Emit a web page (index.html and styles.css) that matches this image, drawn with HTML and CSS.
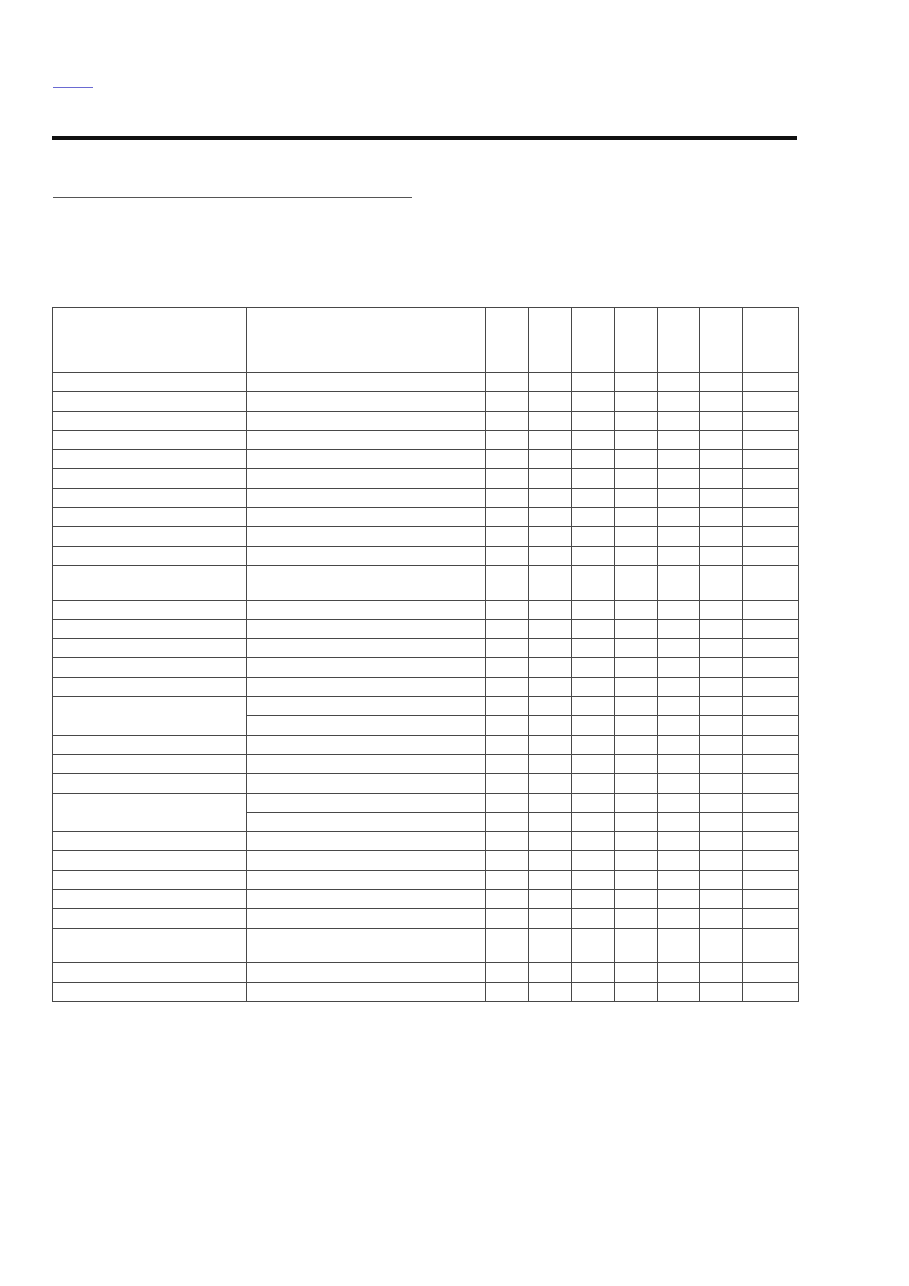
FILE: index.html
```html
<!DOCTYPE html>
<html>
<head>
<meta charset="utf-8">
<link rel="stylesheet" href="styles.css">
</head>
<body>
<div class="page">
  <div class="link-line"></div>
  <div class="rule"></div>
  <div class="sub-line"></div>
  <table class="grid">
    <colgroup>
      <col class="c1"><col class="c2"><col class="cn"><col class="cn"><col class="cn"><col class="cn"><col class="cm"><col class="cn"><col class="cl">
    </colgroup>
    <tbody>
      <tr class="head"><td></td><td></td><td></td><td></td><td></td><td></td><td></td><td></td><td></td></tr>
      <tr class="n"><td></td><td></td><td></td><td></td><td></td><td></td><td></td><td></td><td></td></tr>
      <tr class="n"><td></td><td></td><td></td><td></td><td></td><td></td><td></td><td></td><td></td></tr>
      <tr class="n"><td></td><td></td><td></td><td></td><td></td><td></td><td></td><td></td><td></td></tr>
      <tr class="n"><td></td><td></td><td></td><td></td><td></td><td></td><td></td><td></td><td></td></tr>
      <tr class="n"><td></td><td></td><td></td><td></td><td></td><td></td><td></td><td></td><td></td></tr>
      <tr class="n"><td></td><td></td><td></td><td></td><td></td><td></td><td></td><td></td><td></td></tr>
      <tr class="n"><td></td><td></td><td></td><td></td><td></td><td></td><td></td><td></td><td></td></tr>
      <tr class="n"><td></td><td></td><td></td><td></td><td></td><td></td><td></td><td></td><td></td></tr>
      <tr class="n"><td></td><td></td><td></td><td></td><td></td><td></td><td></td><td></td><td></td></tr>
      <tr class="n"><td></td><td></td><td></td><td></td><td></td><td></td><td></td><td></td><td></td></tr>
      <tr class="t"><td></td><td></td><td></td><td></td><td></td><td></td><td></td><td></td><td></td></tr>
      <tr class="n"><td></td><td></td><td></td><td></td><td></td><td></td><td></td><td></td><td></td></tr>
      <tr class="n"><td></td><td></td><td></td><td></td><td></td><td></td><td></td><td></td><td></td></tr>
      <tr class="n"><td></td><td></td><td></td><td></td><td></td><td></td><td></td><td></td><td></td></tr>
      <tr class="n"><td></td><td></td><td></td><td></td><td></td><td></td><td></td><td></td><td></td></tr>
      <tr class="n"><td></td><td></td><td></td><td></td><td></td><td></td><td></td><td></td><td></td></tr>
      <tr class="n"><td rowspan="2"></td><td></td><td></td><td></td><td></td><td></td><td></td><td></td><td></td></tr>
      <tr class="n"><td></td><td></td><td></td><td></td><td></td><td></td><td></td><td></td></tr>
      <tr class="n"><td></td><td></td><td></td><td></td><td></td><td></td><td></td><td></td><td></td></tr>
      <tr class="n"><td></td><td></td><td></td><td></td><td></td><td></td><td></td><td></td><td></td></tr>
      <tr class="n"><td></td><td></td><td></td><td></td><td></td><td></td><td></td><td></td><td></td></tr>
      <tr class="n"><td rowspan="2"></td><td></td><td></td><td></td><td></td><td></td><td></td><td></td><td></td></tr>
      <tr class="n"><td></td><td></td><td></td><td></td><td></td><td></td><td></td><td></td></tr>
      <tr class="n"><td></td><td></td><td></td><td></td><td></td><td></td><td></td><td></td><td></td></tr>
      <tr class="n"><td></td><td></td><td></td><td></td><td></td><td></td><td></td><td></td><td></td></tr>
      <tr class="n"><td></td><td></td><td></td><td></td><td></td><td></td><td></td><td></td><td></td></tr>
      <tr class="n"><td></td><td></td><td></td><td></td><td></td><td></td><td></td><td></td><td></td></tr>
      <tr class="n"><td></td><td></td><td></td><td></td><td></td><td></td><td></td><td></td><td></td></tr>
      <tr class="t"><td></td><td></td><td></td><td></td><td></td><td></td><td></td><td></td><td></td></tr>
      <tr class="n"><td></td><td></td><td></td><td></td><td></td><td></td><td></td><td></td><td></td></tr>
      <tr class="n"><td></td><td></td><td></td><td></td><td></td><td></td><td></td><td></td><td></td></tr>
    </tbody>
  </table>
</div>
</body>
</html>
```
FILE: styles.css
```css
html, body {
  margin: 0;
  padding: 0;
  background: #ffffff;
  font-family: "Liberation Sans", Arial, sans-serif;
}
.page {
  padding: 0 0 0 52px;
  width: 746px;
}
.link-line {
  margin: 87px 0 0 1px;
  width: 40px;
  height: 1px;
  background: #6a6ad2;
}
.rule {
  margin-top: 48px;
  width: 745px;
  height: 4px;
  background: #111111;
}
.sub-line {
  margin: 57px 0 0 1px;
  width: 359px;
  height: 1px;
  background: #555555;
}
.grid {
  margin-top: 109px;
  border-collapse: collapse;
  table-layout: fixed;
  width: 747px;
}
.grid td {
  border: 1px solid #484848;
  padding: 0;
}
.c1 { width: 194px; }
.c2 { width: 239px; }
.cn { width: 43px; }
.cm { width: 42px; }
.cl { width: 56px; }
.head { height: 65px; }
.n { height: 19.3px; }
.t { height: 34.6px; }
```
